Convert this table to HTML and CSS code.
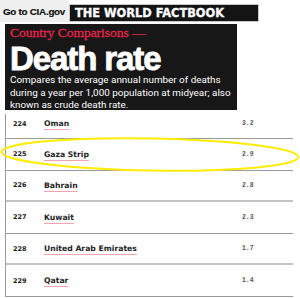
FILE: index.html
```html
<!DOCTYPE html>
<html lang="en">
<head>
<meta charset="utf-8">
<title>Death rate - The World Factbook</title>
<link rel="stylesheet" href="styles.css">
</head>
<body>
<div class="page">
  <header class="topbar">
    <a class="cia" href="#">Go to CIA.gov</a>
    <div class="brand">THE WORLD FACTBOOK</div>
  </header>
  <section class="hero">
    <p class="kicker">Country Comparisons —</p>
    <h1 class="title">Death rate</h1>
    <p class="desc">Compares the average annual number of deaths during a year per 1,000 population at midyear; also known as crude death rate.</p>
  </section>
  <div class="table">
    <div class="row row--first"><span class="rank">224</span><a class="country" href="#">Oman</a><span class="value">3.2</span></div>
    <div class="row"><span class="rank">225</span><a class="country" href="#">Gaza Strip</a><span class="value">2.9</span></div>
    <div class="row row--soft"><span class="rank">226</span><a class="country" href="#">Bahrain</a><span class="value">2.8</span></div>
    <div class="row"><span class="rank">227</span><a class="country" href="#">Kuwait</a><span class="value">2.3</span></div>
    <div class="row row--soft"><span class="rank">228</span><a class="country" href="#">United Arab Emirates</a><span class="value">1.7</span></div>
    <div class="row"><span class="rank">229</span><a class="country" href="#">Qatar</a><span class="value">1.4</span></div>
  </div>
  <svg class="annot" width="300" height="298" viewBox="0 0 300 298" aria-hidden="true">
    <ellipse cx="150" cy="154.5" rx="148.5" ry="16" transform="rotate(1 150 154.5)" fill="none" stroke="#ffec00" stroke-width="2"/>
  </svg>
</div>
</body>
</html>
```
FILE: styles.css
```css
html, body {
  margin: 0;
  padding: 0;
  background: #ffffff;
}
.page {
  position: relative;
  width: 300px;
  height: 298px;
  overflow: hidden;
  font-family: "DejaVu Sans", sans-serif;
}
.topbar {
  display: flex;
  align-items: flex-start;
  height: 22px;
}
.cia {
  display: flex;
  align-items: center;
  box-sizing: border-box;
  width: 69px;
  height: 22px;
  padding-left: 3px;
  background: #efefef;
  color: #111;
  font-family: "Liberation Sans", sans-serif;
  font-weight: 700;
  font-size: 9.8px;
  letter-spacing: -0.25px;
  white-space: nowrap;
  text-decoration: none;
  -webkit-text-stroke: 0.2px #111;
}
.brand {
  display: flex;
  align-items: center;
  box-sizing: border-box;
  margin-top: 4px;
  width: 190px;
  height: 18px;
  padding-left: 5px;
  background: #141414;
  border: 1px solid #c8c8c8;
  color: #fff;
  font-family: "DejaVu Sans", sans-serif;
  font-weight: 700;
  font-size: 11.4px;
  white-space: nowrap;
  -webkit-text-stroke: 0.3px #fff;
}
.hero {
  box-sizing: border-box;
  margin: 2px 0 0 5px;
  width: 232px;
  height: 86px;
  padding: 0 0 0 5px;
  background: #171717;
  color: #fff;
}
.kicker {
  margin: 0;
  font-family: "Liberation Serif", serif;
  font-size: 13.5px;
  line-height: 17px;
  color: #e8234b;
  -webkit-text-stroke: 0.3px #e8234b;
}
.title {
  margin: 2.4px 0 0;
  font-family: "Liberation Sans", sans-serif;
  font-weight: 700;
  font-size: 33px;
  line-height: 31px;
  letter-spacing: -1.1px;
  -webkit-text-stroke: 0.8px #fff;
}
.desc {
  margin: 0;
  font-family: "Roboto", sans-serif;
  font-size: 9.9px;
  line-height: 12.5px;
}
.table {
  margin: 4px 0 0 5px;
  width: 287px;
  border-left: 1px solid #9a9a9a;
}
.row {
  display: grid;
  grid-template-columns: 31px 198px 1fr;
  align-items: center;
  box-sizing: border-box;
  height: 31.6px;
  padding-left: 7px;
  border-bottom: 1px solid #9a9a9a;
}
.row--first {
  height: 25px;
  padding-bottom: 5px;
}
.row--soft {
  border-bottom: 2px solid #c4c4c4;
}
.rank {
  font-family: "DejaVu Sans", sans-serif;
  font-weight: 700;
  font-size: 6.5px;
  color: #222;
}
.country {
  justify-self: start;
  font-family: "DejaVu Sans", sans-serif;
  font-weight: 700;
  font-size: 7.7px;
  color: #222;
  text-decoration: underline;
  text-decoration-color: #f4a3b3;
  text-decoration-thickness: 1px;
  text-underline-offset: 2.5px;
}
.value {
  font-family: "Liberation Mono", monospace;
  font-weight: 700;
  font-size: 6.4px;
  color: #555;
}
.annot {
  position: absolute;
  left: 0;
  top: 0;
  pointer-events: none;
}
```
